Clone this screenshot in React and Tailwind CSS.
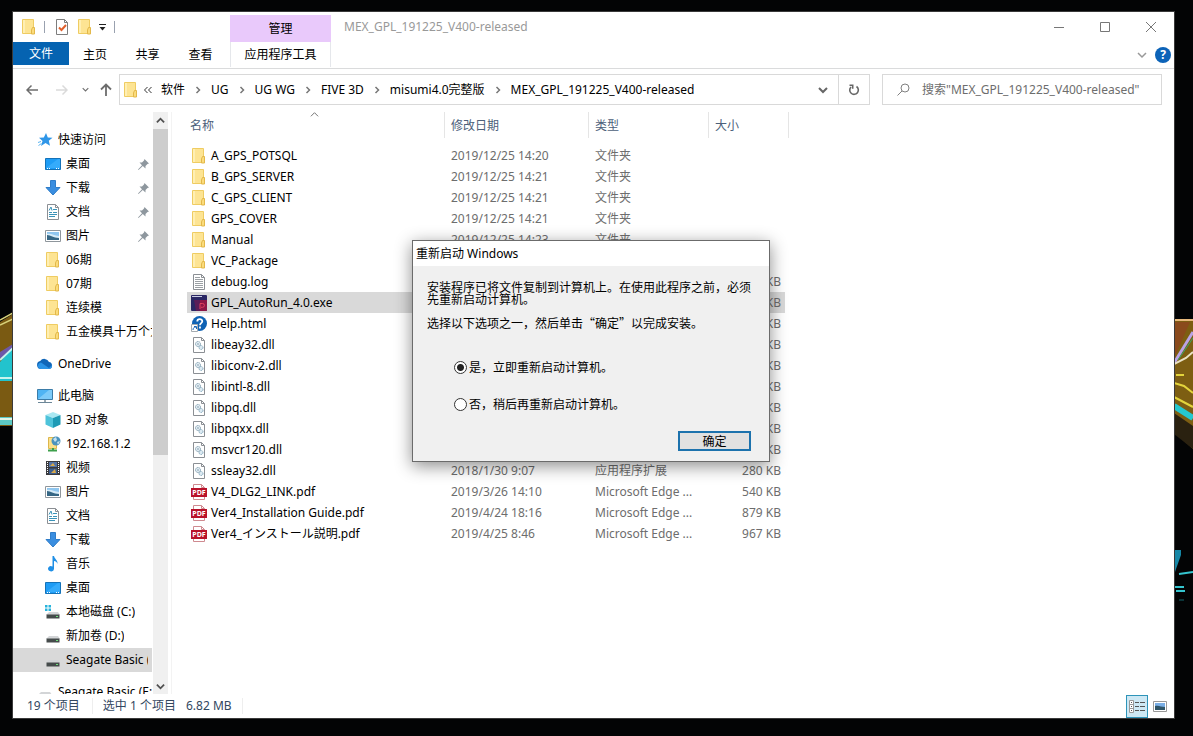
import React, { useState } from 'react'

const uiFont = "font-['Noto_Sans','Noto_Sans_CJK_SC',sans-serif]";
const dialogFont = "font-['Noto_Sans_CJK_SC',sans-serif]";

function Svg({ size = 16, children }) {
	return (
		<svg width={size} height={size} viewBox="0 0 16 16" fill="none" className="shrink-0" aria-hidden="true">
			{children}
		</svg>
	);
}

const Folder = () => (
	<Svg>
		<path d="M1.500.500h11v14h-11z" fill="#fde493" stroke="#efcc62" />
		<path d="M2 1h2v13H2z" fill="#ffefb3" />
		<path d="M11.500 8.500h2v6.500h-3v-4z" fill="#fbdc7c" stroke="#e3b84a" />
	</Svg>
);

const Desktop = () => (
	<Svg>
		<path d="M.5 2.500h15v11H.5z" fill="#1e9cf5" stroke="#1472b8" />
		<path d="M1 12L13 3h2v9z" fill="#35abfb" />
		<path d="M2 12.500h1M4 12.500h1M11 12.500h1M13 12.500h1" stroke="#fff" />
	</Svg>
);

const Download = () => (
	<Svg>
		<path d="M5.500.500h5v7h4.500L8 15 1 7.500h4.500z" fill="#3a8ee0" stroke="#2f7dc9" />
	</Svg>
);

const Doc = () => (
	<Svg>
		<path d="M2.500.500h8l3 3v12h-11z" fill="#fff" stroke="#8b8f94" />
		<path d="M10.500.500v3h3" stroke="#8b8f94" />
		<path d="M4 6.500L6 3l1 3.500M8 5.500h4M4 8.500h3M8 8.500h4M4 10.500h8M4 12.500h6" stroke="#3b93b8" />
	</Svg>
);

const Pictures = () => (
	<Svg>
		<path d="M.5 2.500h15v11H.5z" fill="#fff" stroke="#8f969c" />
		<path d="M2 4h12v8H2z" fill="#8fc6ef" />
		<path d="M2 6c4-1 7 2 12 2v2H2z" fill="#d6ebf7" />
		<path d="M2 7c4 0 6 3 12 3v2H2z" fill="#366785" />
	</Svg>
);

const Star = () => (
	<Svg>
		<path d="M9 1l1.800 4.500 4.700.300-3.700 3 1.200 5L8.500 11l-4.500 3 1.500-5L2 5.800l4.800-.3z" fill="#2f96e8" />
		<path d="M1 10.500l3-1M1.500 13.500l3-2" stroke="#5bb4f0" />
	</Svg>
);

const Cloud = () => (
	<Svg>
		<path d="M4 13a4 4 0 01-.8-7.900A5 5 0 0112 6a3.600 3.600 0 01.500 7z" fill="#1066b8" />
		<path d="M2 12.500a3.500 3.500 0 012-6l8 5.500 3-3a3.500 3.500 0 01-2.500 4H4z" fill="#2a93e6" />
	</Svg>
);

const Computer = () => (
	<Svg>
		<path d="M.5 1.500h15v10H.5z" fill="#4fb4f3" stroke="#3b7ca8" />
		<path d="M1 11L12 2h3v9z" fill="#7dcbf9" />
		<path d="M7 12h2v2H7z" fill="#9aa7b0" />
		<path d="M1 14.500h14" stroke="#6c8798" />
	</Svg>
);

const Cube = () => (
	<Svg>
		<path d="M8 0l7.500 3L8 6 .5 3z" fill="#a9e8f2" />
		<path d="M.5 3L8 6v10L.5 12.500z" fill="#4ec3da" />
		<path d="M15.500 3L8 6v10l7.500-3.500z" fill="#1d9ab5" />
	</Svg>
);

const NetPlace = () => (
	<Svg>
		<path d="M3.500 1.500h8v11h-8z" fill="#fbe08a" stroke="#dcb64c" />
		<circle cx="11" cy="5" r="4.500" fill="#4a93be" />
		<path d="M8 3l3-2 1 3-2 2zM12 6l3-1-2 4z" fill="#c5e1ee" />
		<path d="M8 12v3M3 14.500h9" stroke="#3ea04c" strokeWidth="2" />
	</Svg>
);

const Video = () => (
	<Svg>
		<path d="M1 1h14v14H1z" fill="#3a3a3e" />
		<path d="M2.500 2v12M13.500 2v12" stroke="#fff" strokeDasharray="1 1" />
		<path d="M4 2h8v5H4z" fill="#5574a6" />
		<path d="M4 8.500h8V14H4z" fill="#3f5f8e" />
		<path d="M5 6l3-3 2 3zM6 13l4-4 1 4z" fill="#d9a94a" />
	</Svg>
);

const Music = () => (
	<Svg>
		<path d="M7.500 0h1.500c.5 3 4 4 3.500 8-.5-2-2-2.800-3.500-3v8a3 2.600 0 11-1.500-2.500z" fill="#1f8fe6" />
	</Svg>
);

const Drive = ({ system }) => (
	<Svg>
		{system && <path d="M0 1h2.500v2.500H0zM3.500 1H6v2.500H3.500zM0 4.500h2.500V7H0zM3.500 4.500H6V7H3.500z" fill="#27b3dc" />}
		<path d="M4 8h9l2 3H1z" fill="#d3d5d7" />
		<path d="M1.500 10.500h13v4h-13z" fill="#454b4b" />
		<path d="M11 12.500h2" stroke="#6ee07c" />
	</Svg>
);

const Log = () => (
	<Svg>
		<path d="M2.500.500h8l3 3v12h-11z" fill="#fff" stroke="#8b8f94" />
		<path d="M10.500.500v3h3" stroke="#8b8f94" />
		<path d="M4 3.500h5M4 5.500h8M4 7.500h8M4 9.500h8M4 11.500h8M4 13.500h8" stroke="#9ba0a4" />
	</Svg>
);

const Exe = () => (
	<Svg>
		<rect width="16" height="16" rx="1" fill="#2a2764" />
		<path d="M7 5h9v10a1 1 0 01-1 1H8z" fill="#8d1746" />
		<path d="M3 5h6v11H5z" fill="#5a1d58" />
		<path d="M1 1.500h10" stroke="#c9cde4" />
		<path d="M9 14V8.500h2.500a1.800 1.800 0 010 3.800H10" stroke="#e2405c" />
	</Svg>
);

const Help = () => (
	<Svg>
		<circle cx="8.500" cy="7.500" r="7.500" fill="#0f62b4" />
		<path d="M6.300 5.500c0-3 5-3 5-.3 0 2-2.300 1.900-2.300 4M9 10.500v2" stroke="#fff" strokeWidth="1.800" />
		<path d="M.5 8.500h6v7h-6z" fill="#fff" stroke="#a5abb0" />
		<path d="M2 14c0-2 1-3 3-3M3 10.500h2.500V13" stroke="#1a66b8" />
	</Svg>
);

const Dll = () => (
	<Svg>
		<path d="M2.500.500h8l3 3v12h-11z" fill="#fff" stroke="#8b8f94" />
		<path d="M10.500.500v3h3" stroke="#8b8f94" />
		<circle cx="7" cy="7" r="2.500" fill="#e4eef4" stroke="#8aa5b5" strokeDasharray="1.500 .5" />
		<circle cx="7" cy="7" r=".8" fill="#7796a8" />
		<circle cx="10" cy="10.500" r="2" fill="#dceaf2" stroke="#82a6bb" strokeDasharray="1.300 .5" />
	</Svg>
);

const Pdf = () => (
	<Svg>
		<path d="M2.500.500h8l3 3v12h-11z" fill="#fff" stroke="#cf8a90" />
		<path d="M10.500.500v3h3" stroke="#cf8a90" />
		<path d="M0 4h16v9H0z" fill="#b9122a" />
		<text x="8" y="11" textAnchor="middle" fontSize="7" fontWeight="700" fill="#fff" fontFamily="Open Sans, sans-serif">PDF</text>
	</Svg>
);

const Pin = () => (
	<svg width="11" height="11" viewBox="0 0 11 11" className="shrink-0" aria-hidden="true">
		<path d="M6.500 0L11 4.500 9.500 5 7.500 7v2.500L4.800 7 .5 11 0 10.500 4 6.200 1.500 3.500H4l2-2z" fill="#8e979e" />
	</svg>
);

function Chevron({ dir, size = 10, className = "", weight = 1.5 }) {
	const paths = {
		down: "M1 3l4 4 4-4",
		up: "M1 7l4-4 4 4",
		right: "M3.500 2l3 3-3 3",
	};
	return (
		<svg width={size} height={size} viewBox="0 0 10 10" fill="none" stroke="currentColor" strokeWidth={weight} className={className} aria-hidden="true">
			<path d={paths[dir]} />
		</svg>
	);
}

const tree = [
	{ label: "快速访问", icon: <Star />, root: true },
	{ label: "桌面", icon: <Desktop />, pinned: true },
	{ label: "下载", icon: <Download />, pinned: true },
	{ label: "文档", icon: <Doc />, pinned: true },
	{ label: "图片", icon: <Pictures />, pinned: true },
	{ label: "06期", icon: <Folder /> },
	{ label: "07期", icon: <Folder /> },
	{ label: "连续模", icon: <Folder /> },
	{ label: "五金模具十万个为", icon: <Folder /> },
	{ label: "OneDrive", icon: <Cloud />, root: true },
	{ label: "此电脑", icon: <Computer />, root: true },
	{ label: "3D 对象", icon: <Cube /> },
	{ label: "192.168.1.2", icon: <NetPlace /> },
	{ label: "视频", icon: <Video /> },
	{ label: "图片", icon: <Pictures /> },
	{ label: "文档", icon: <Doc /> },
	{ label: "下载", icon: <Download /> },
	{ label: "音乐", icon: <Music /> },
	{ label: "桌面", icon: <Desktop /> },
	{ label: "本地磁盘 (C:)", icon: <Drive system /> },
	{ label: "新加卷 (D:)", icon: <Drive /> },
	{ label: "Seagate Basic (E:)", icon: <Drive />, selected: true },
	{ label: "Seagate Basic (E:)", icon: <Drive />, root: true },
];

const files = [
	{ name: "A_GPS_POTSQL", icon: <Folder />, date: "2019/12/25 14:20", type: "文件夹" },
	{ name: "B_GPS_SERVER", icon: <Folder />, date: "2019/12/25 14:21", type: "文件夹" },
	{ name: "C_GPS_CLIENT", icon: <Folder />, date: "2019/12/25 14:21", type: "文件夹" },
	{ name: "GPS_COVER", icon: <Folder />, date: "2019/12/25 14:21", type: "文件夹" },
	{ name: "Manual", icon: <Folder />, date: "2019/12/25 14:23", type: "文件夹" },
	{ name: "VC_Package", icon: <Folder /> },
	{ name: "debug.log", icon: <Log />, size: "KB" },
	{ name: "GPL_AutoRun_4.0.exe", icon: <Exe />, size: "KB", selected: true },
	{ name: "Help.html", icon: <Help />, size: "KB" },
	{ name: "libeay32.dll", icon: <Dll />, size: "KB" },
	{ name: "libiconv-2.dll", icon: <Dll />, size: "KB" },
	{ name: "libintl-8.dll", icon: <Dll />, size: "KB" },
	{ name: "libpq.dll", icon: <Dll />, size: "KB" },
	{ name: "libpqxx.dll", icon: <Dll />, size: "KB" },
	{ name: "msvcr120.dll", icon: <Dll />, size: "KB" },
	{ name: "ssleay32.dll", icon: <Dll />, date: "2018/1/30 9:07", type: "应用程序扩展", size: "280 KB" },
	{ name: "V4_DLG2_LINK.pdf", icon: <Pdf />, date: "2019/3/26 14:10", type: "Microsoft Edge ...", size: "540 KB" },
	{ name: "Ver4_Installation Guide.pdf", icon: <Pdf />, date: "2019/4/24 18:16", type: "Microsoft Edge ...", size: "879 KB" },
	{ name: "Ver4_インストール説明.pdf", icon: <Pdf />, date: "2019/4/25 8:46", type: "Microsoft Edge ...", size: "967 KB" },
];

const crumbs = ["软件", "UG", "UG WG", "FIVE 3D", "misumi4.0完整版", "MEX_GPL_191225_V400-released"];

function Wallpaper() {
	return (
		<>
			<svg className="absolute left-0 top-[300px]" width="13" height="140" viewBox="0 0 13 140" aria-hidden="true">
				<path d="M0 22l13-8v112H0z" fill="#7a5a12" />
				<path d="M0 20l13-7M0 25l13-6" stroke="#d8d27a" strokeWidth="1.500" />
				<path d="M0 52l13-8v14H0z" fill="#6d58a8" />
				<path d="M0 62l13-15v34H0z" fill="#22c3cd" />
				<path d="M0 60l13-12M0 78h13" stroke="#c8f4ee" strokeWidth="2" />
				<path d="M0 117h13v8H0z" fill="#5cc9c4" />
				<path d="M0 119h13" stroke="#e2f5e8" strokeWidth="2" />
			</svg>
			<svg className="absolute right-0 top-[310px]" width="19" height="300" viewBox="0 0 19 300" aria-hidden="true">
				<path d="M0 9h19v130L0 122z" fill="#7d5e12" />
				<path d="M0 10h19" stroke="#e7b97c" strokeWidth="2" />
				<path d="M0 12h16L0 48z" fill="#8a4a1c" />
				<path d="M0 53L19 22" stroke="#b9a3e6" strokeWidth="3" />
				<path d="M4 50l15-22" stroke="#37a868" />
				<path d="M0 54l12-6 7-6" stroke="#e9e2c4" strokeWidth="2" fill="none" />
				<path d="M2 65h8M0 73l10 3 9 7M0 87l19 10" stroke="#e3d43c" strokeWidth="2" fill="none" />
				<path d="M0 96l19 12" stroke="#25c8cf" strokeWidth="6" />
				<path d="M0 103l19 13v23L0 124z" fill="#2a2110" />
				<path d="M0 240h7v5l-5 14-2 6z" fill="#1687a6" />
				<path d="M5 264l14-2M0 277h10M2 281h9" stroke="#35c5cf" strokeWidth="2" />
				<path d="M5 290h5" stroke="#12646c" />
			</svg>
		</>
	);
}

function Header() {
	return (
		<header className="flex border-b border-[#dadbdc]">
			<div className="w-[217px] shrink-0">
				{/* quick access */}
				<div className="flex h-[30px] items-center pl-2">
					<Folder />
					<span className="ml-[7px] h-3 w-px bg-gray-400" />
					<button type="button" aria-label="属性" className="ml-[9px]">
						<Svg>
							<path d="M2.500.500h8l3 3v12h-11z" fill="#fff" stroke="#7d7d7d" />
							<path d="M10.500.500v3h3" stroke="#7d7d7d" />
							<path d="M5 8.500l2.500 2.500L12 6" stroke="#e0602c" strokeWidth="2" />
						</Svg>
					</button>
					<button type="button" aria-label="新建文件夹" className="ml-[7px]">
						<Folder />
					</button>
					<button type="button" aria-label="自定义快速访问工具栏" className="ml-[5px]">
						<svg width="9" height="8" viewBox="0 0 9 8">
							<path d="M1 1.500h7" stroke="#222" />
							<path d="M1.500 4h6l-3 3.500z" fill="#222" />
						</svg>
					</button>
					<span className="ml-[7px] h-3 w-px bg-gray-400" />
				</div>
				<nav className="flex h-[26px]">
					<button type="button" className="h-[23px] w-14 bg-[#0563b1] text-white">文件</button>
					<button type="button" className="h-[25px] w-[52px]">主页</button>
					<button type="button" className="h-[25px] w-[53px]">共享</button>
					<button type="button" className="h-[25px] w-[53px]">查看</button>
				</nav>
			</div>

			<div className="w-[101px] shrink-0 pt-[3px]">
				<div className="flex h-[27px] items-center justify-center bg-[#e9c9fb]">管理</div>
				<button type="button" className="h-[25px] w-full border-x border-gray-200">应用程序工具</button>
			</div>

			<div className="min-w-0 flex-1">
				<div className="flex h-[30px] items-center justify-between">
					<h1 className="truncate pl-[13px] text-[#999]">MEX_GPL_191225_V400-released</h1>
					<div className="flex h-full text-[#777]">
						<button type="button" aria-label="最小化" className="flex w-[46px] items-center justify-center">
							<svg width="10" height="10"><path d="M0 5.500h10" stroke="currentColor" /></svg>
						</button>
						<button type="button" aria-label="最大化" className="flex w-[46px] items-center justify-center">
							<svg width="10" height="10"><path d="M.5.500h9v9h-9z" stroke="currentColor" fill="none" /></svg>
						</button>
						<button type="button" aria-label="关闭" className="flex w-[46px] items-center justify-center">
							<svg width="10" height="10"><path d="M0 0l10 10M10 0L0 10" stroke="currentColor" /></svg>
						</button>
					</div>
				</div>
				<div className="flex h-[26px] items-center justify-end gap-2 pr-[3px]">
					<button type="button" aria-label="展开功能区" className="text-[#999]">
						<Chevron dir="down" />
					</button>
					<button type="button" aria-label="帮助" className="flex size-4 items-center justify-center rounded-full bg-[#0c63b8] font-bold text-white">?</button>
				</div>
			</div>
		</header>
	);
}

function AddressBar() {
	return (
		<div className="flex pt-[5px] pr-3 pb-[7px]">
			<div className="flex w-[106px] shrink-0 items-center text-[#6d6d6d]">
				<button type="button" aria-label="后退" className="ml-[13px]">
					<svg width="12" height="12" viewBox="0 0 12 12" fill="none" stroke="currentColor" strokeWidth="1.500"><path d="M12 6H1M5.500 1.500L1 6l4.500 4.500" /></svg>
				</button>
				<button type="button" aria-label="前进" className="ml-[18px] text-[#dadada]">
					<svg width="12" height="12" viewBox="0 0 12 12" fill="none" stroke="currentColor" strokeWidth="1.500"><path d="M0 6h11M6.500 1.500L11 6l-4.500 4.500" /></svg>
				</button>
				<button type="button" aria-label="最近浏览的位置" className="ml-[14px]">
					<Chevron dir="down" size={7} />
				</button>
				<button type="button" aria-label="上移" className="ml-[11px]">
					<svg width="12" height="13" viewBox="0 0 12 13" fill="none" stroke="currentColor" strokeWidth="1.800"><path d="M6 13V1M1 6.500l5-5 5 5" /></svg>
				</button>
			</div>

			<div className="flex h-[31px] min-w-0 flex-1 items-center border border-[#d9d9d9]">
				<div className="flex min-w-0 flex-1 items-center pl-[3px] whitespace-nowrap">
					<Folder />
					<svg width="22" height="10" viewBox="0 0 22 10" fill="none" stroke="#333" className="shrink-0" aria-hidden="true">
						<path d="M8.500 2l-3 3 3 3M12.500 2l-3 3 3 3" />
					</svg>
					{crumbs.map((crumb, i) => (
						<React.Fragment key={crumb}>
							{i > 0 && (
								<span className="flex w-[26px] shrink-0 justify-center text-[#777]">
									<Chevron dir="right" />
								</span>
							)}
							<a href="#">{crumb}</a>
						</React.Fragment>
					))}
				</div>
				<button type="button" aria-label="历史记录" className="flex w-[30px] justify-center text-[#666]">
					<Chevron dir="down" weight={2} />
				</button>
				<button type="button" aria-label="刷新" className="flex h-full w-[31px] items-center justify-center border-l border-[#d9d9d9] text-[#666]">
					<svg width="12" height="12" viewBox="0 0 12 12" fill="none" stroke="currentColor" strokeWidth="1.600">
						<path d="M8.500 2.500A4.300 4.300 0 113 3M1.500 1.300h3.200v3.400" />
					</svg>
				</button>
			</div>

			<div className="ml-3 flex h-[31px] w-[280px] items-center border border-[#d9d9d9] pl-[14px]">
				<svg width="13" height="13" viewBox="0 0 13 13" fill="none" stroke="#808080" aria-hidden="true">
					<circle cx="8" cy="5" r="4" />
					<path d="M5 8L.5 12.500" />
				</svg>
				<input
					type="search"
					aria-label="搜索"
					placeholder={'搜索"MEX_GPL_191225_V400-released"'}
					className="min-w-0 flex-1 pl-3 outline-none placeholder:text-[#6d6d6d]"
				/>
			</div>
		</div>
	);
}

function Sidebar() {
	return (
		<aside className="flex shrink-0">
			<ul className="w-[139px] overflow-hidden pt-4">
				{tree.map((item, i) => (
					<li key={i} className={item.root && i > 0 ? "mt-2" : ""}>
						<a
							href="#"
							className={`flex h-6 items-center gap-[5px] whitespace-nowrap ${item.root ? "pl-6" : "pl-8"} ${item.pinned ? "pr-[3px]" : ""} ${item.selected ? "bg-[#d9d9d9] pr-1" : ""}`}>
							{item.icon}
							<span className={`min-w-0 overflow-hidden ${item.pinned ? "flex-1" : ""}`}>{item.label}</span>
							{item.pinned && <Pin />}
						</a>
					</li>
				))}
			</ul>
			{/* scroll bar */}
			<div className="ml-px flex w-[15px] flex-col bg-[#f0f0f0] text-[#505050]">
				<button type="button" aria-label="向上滚动" className="flex h-[17px] items-center justify-center">
					<Chevron dir="up" size={9} weight={2} />
				</button>
				<div className="h-[56%] bg-[#cdcdcd]" />
				<button type="button" aria-label="向下滚动" className="mt-auto flex h-4 items-center justify-center">
					<Chevron dir="down" size={9} weight={2} />
				</button>
			</div>
			<div className="ml-[3px] w-px bg-[#f3f3f3]" />
		</aside>
	);
}

function FileList() {
	return (
		<main className="min-w-0 flex-1 overflow-hidden pl-[15px]">
			<table className="w-[602px] table-fixed border-collapse text-left">
				<colgroup>
					<col className="w-[258px]" />
					<col className="w-[144px]" />
					<col className="w-[120px]" />
					<col className="w-[76px]" />
					<col className="w-1" />
				</colgroup>
				<thead className="text-[#4c607a]">
					<tr className="h-[33px] align-top">
						<th className="p-0 font-normal">
							<div className="relative flex h-[26px] items-center border-r border-[#e5e5e5] pt-[2px] pl-[3px]">
								名称
								<Chevron dir="up" size={9} weight={1} className="absolute top-[-2px] left-[123px] text-[#666]" />
							</div>
						</th>
						<th className="p-0 font-normal">
							<div className="flex h-[26px] items-center border-r border-[#e5e5e5] pt-[2px] pl-[6px]">修改日期</div>
						</th>
						<th className="p-0 font-normal">
							<div className="flex h-[26px] items-center border-r border-[#e5e5e5] pt-[2px] pl-[6px]">类型</div>
						</th>
						<th colSpan={2} className="p-0 font-normal">
							<div className="flex h-[26px] items-center border-r border-[#e5e5e5] pt-[2px] pl-[6px]">大小</div>
						</th>
					</tr>
				</thead>
				<tbody className="text-[#6d6d6d]">
					{files.map((file) => (
						<tr key={file.name} className="h-[21px]">
							<td className={`p-0 ${file.selected ? "bg-[#d9d9d9]" : ""}`}>
								<div className="flex items-center gap-1 pl-1 text-black">
									{file.icon}
									{file.name}
								</div>
							</td>
							<td className={`p-0 pl-[6px] ${file.selected ? "bg-[#d9d9d9]" : ""}`}>{file.date}</td>
							<td className={`p-0 pl-[6px] ${file.selected ? "bg-[#d9d9d9]" : ""}`}>{file.type}</td>
							<td className={`p-0 pr-1 text-right ${file.selected ? "bg-[#d9d9d9]" : ""}`}>{file.size}</td>
							<td className="p-0" />
						</tr>
					))}
				</tbody>
			</table>
		</main>
	);
}

function StatusBar() {
	return (
		<footer className="flex h-6 shrink-0 items-center pr-[7px] pl-[14px] text-[#33475f]">
			<span>19 个项目</span>
			<span className="mr-[10px] ml-3 h-4 w-px bg-[#eee]" />
			<span>选中 1 个项目</span>
			<span className="ml-[10px]">6.82 MB</span>
			<span className="ml-[10px] h-4 w-px bg-[#eee]" />
			<button type="button" aria-label="详细信息" className="ml-auto flex h-[23px] w-[22px] items-center justify-center border border-[#2e94b9] bg-[#cde8f4]">
				<svg width="16" height="13" viewBox="0 0 16 13" fill="none">
					<path d="M.5.500h4v12h-4zM.5 4.500h4M.5 8.500h4" fill="#fff" stroke="#999" />
					<path d="M2 2.500h1M2 6.500h1M2 10.500h1M6 2.500h4M11 2.500h5M6 6.500h4M11 6.500h5M6 10.500h4M11 10.500h5" stroke="#555" />
				</svg>
			</button>
			<button type="button" aria-label="大图标" className="ml-1 flex w-[15px] justify-center">
				<svg width="14" height="11" viewBox="0 0 14 11">
					<path d="M.5.500h13v10H.5z" fill="#fff" stroke="#999" />
					<path d="M2 2h10v7H2z" fill="#79aee6" />
					<path d="M2 5c4-1 6 1 10 1v3H2z" fill="#2e5467" />
				</svg>
			</button>
		</footer>
	);
}

function RestartDialog() {
	const [restart, setRestart] = useState("now");

	const radio = "size-[13px] appearance-none rounded-full border border-[#333] bg-white checked:bg-[radial-gradient(circle,#222_0_3px,#fff_4px)]";

	return (
		<section
			role="dialog"
			aria-labelledby="restart-title"
			className="absolute top-[240px] left-[412px] w-[358px] border border-[#6b6b6b] bg-[#f0f0f0] shadow-[0_4px_16px_rgba(0,0,0,0.45)]">
			<h2 id="restart-title" className="flex h-[25px] items-center bg-white pl-[3px]">重新启动 Windows</h2>
			<form onSubmit={(e) => e.preventDefault()} className={`flex flex-col pt-[15px] pr-[18px] pb-[10px] pl-[14px] ${dialogFont}`}>
				<p className="leading-3">安装程序已将文件复制到计算机上。在使用此程序之前，必须先重新启动计算机。</p>
				<p className="mt-3 leading-3">选择以下选项之一，然后单击“确定”以完成安装。</p>
				<label className="mt-[30px] ml-[27px] flex h-4 items-center gap-[2px]">
					<input type="radio" name="restart" checked={restart === "now"} onChange={() => setRestart("now")} className={radio} />
					是，立即重新启动计算机。
				</label>
				<label className="mt-[21px] ml-[27px] flex h-4 items-center gap-[2px]">
					<input type="radio" name="restart" checked={restart === "later"} onChange={() => setRestart("later")} className={radio} />
					否，稍后再重新启动计算机。
				</label>
				<button type="submit" className="mt-[19px] flex h-5 w-[73px] items-center justify-center self-end border-2 border-[#1c72ad] bg-[#e1e1e1]">
					确定
				</button>
			</form>
		</section>
	);
}

function App() {
	return (
		<div className={`relative h-screen overflow-hidden bg-[#030405] pt-[11px] pr-[18px] pb-[17px] pl-3 text-xs text-black ${uiFont}`}>
			<Wallpaper />
			<div className="relative flex h-full flex-col border border-[#3a3a3a] bg-white">
				<Header />
				<AddressBar />
				<div className="flex min-h-0 flex-1">
					<Sidebar />
					<FileList />
				</div>
				<StatusBar />
			</div>
			<RestartDialog />
		</div>
	);
}

export default App
